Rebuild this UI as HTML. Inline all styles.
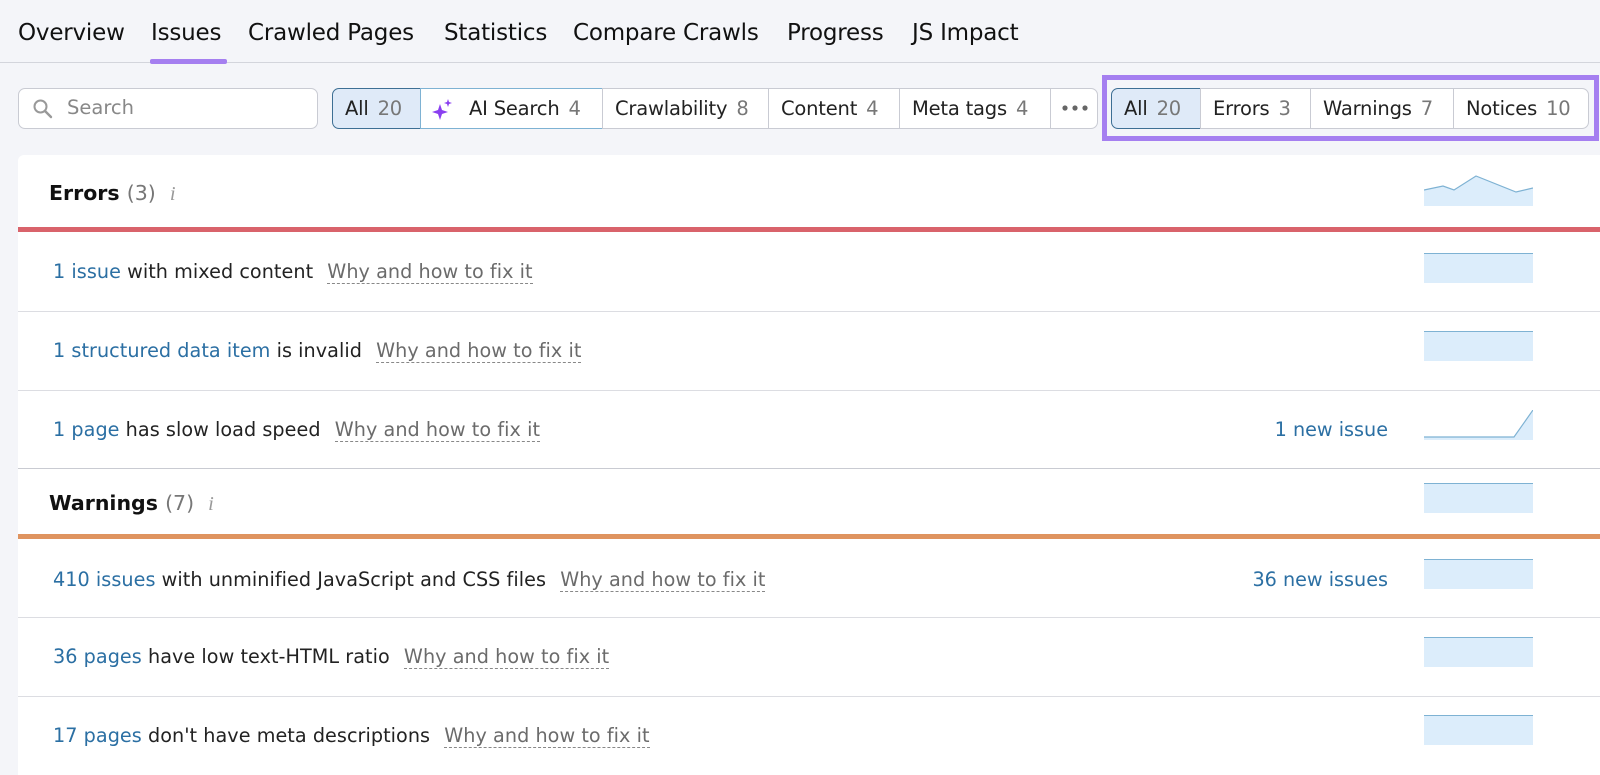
<!DOCTYPE html>
<html><head><meta charset="utf-8"><style>
*{margin:0;padding:0;box-sizing:border-box}
body{width:1600px;height:770px;background:#f4f5f9;font-family:"DejaVu Sans","Liberation Sans",sans-serif;color:#1a1a1a;position:relative;overflow:hidden}
.a{position:absolute;white-space:nowrap}
.nav{top:20px;font-size:23px;color:#111;letter-spacing:-0.2px}
.seg{position:absolute;top:88px;height:41px;border:1px solid #c9cbd3;background:#fff;font-size:19.5px;line-height:39px;padding-left:12px;color:#222;white-space:nowrap;letter-spacing:-0.2px}
.seg b{font-weight:normal;color:#777;margin-left:9px}
.sel{background:#dfeaf8;border-color:#3d6f94}
.card{position:absolute;left:18px;top:155px;width:1582px;height:620px;background:#fff;border-radius:6px 0 0 0}
.row{position:absolute;left:53px;font-size:19.2px;color:#222;white-space:nowrap;letter-spacing:0.05px}
.row a{color:#2b6fa3;text-decoration:none}
.row u{text-decoration:none;color:#6b6b6b;border-bottom:1px dashed #888;margin-left:8px}
.sep{position:absolute;left:18px;width:1582px;height:1px;background:#dcdde2}
.sp{position:absolute;left:1424px;width:109px;height:30px;background:#dcedfb;border-top:1px solid #7eb2d3}
.new{position:absolute;font-size:19.2px;color:#2b6fa3;right:212px;white-space:nowrap}
.h{position:absolute;left:49px;font-size:20.5px;font-weight:bold;color:#111;white-space:nowrap}
.h span{font-weight:normal;color:#777}
.h i{font-family:"Liberation Serif",serif;color:#999;font-weight:normal;margin-left:14px}
</style></head><body>
<div class="a nav" style="left:18px">Overview</div>
<div class="a nav" style="left:151px">Issues</div>
<div class="a nav" style="left:248px">Crawled Pages</div>
<div class="a nav" style="left:444px">Statistics</div>
<div class="a nav" style="left:573px">Compare Crawls</div>
<div class="a nav" style="left:787px">Progress</div>
<div class="a nav" style="left:912px">JS Impact</div>
<div class="a" style="left:0;top:62px;width:1600px;height:1px;background:#d3d5dc"></div>
<div class="a" style="left:150px;top:59px;width:77px;height:5px;background:#a57ff0;border-radius:2px"></div>

<div class="a" style="left:18px;top:88px;width:300px;height:41px;border:1px solid #c9cbd3;border-radius:7px;background:#fff"></div>
<svg class="a" style="left:32px;top:98px" width="22" height="22" viewBox="0 0 22 22"><circle cx="8.5" cy="8.5" r="6" fill="none" stroke="#999" stroke-width="2"/><path d="M13 13l6 6" stroke="#999" stroke-width="2.4" stroke-linecap="round"/></svg>
<div class="a" style="left:67px;top:96px;font-size:19.5px;color:#888">Search</div>

<div class="seg sel" style="left:332px;width:89px;border-radius:7px 0 0 7px">All<b>20</b></div>
<div class="seg" style="left:420px;width:183px;border-color:#7eb2d3;padding-left:48px">AI Search<b>4</b></div>
<svg class="a" style="left:432px;top:98px" width="22" height="22" viewBox="0 0 22 22"><path d="M8 6l2 6 6 2-6 2-2 6-2-6-6-2 6-2z" fill="#8a3ff0"/><path d="M16 1l1 3 3 1-3 1-1 3-1-3-3-1 3-1z" fill="#8a3ff0"/></svg>
<div class="seg" style="left:602px;width:167px">Crawlability<b>8</b></div>
<div class="seg" style="left:768px;width:132px">Content<b>4</b></div>
<div class="seg" style="left:899px;width:152px">Meta tags<b>4</b></div>
<div class="seg" style="left:1050px;width:48px;border-radius:0 7px 7px 0;padding:0"><svg style="position:absolute;left:11px;top:16px" width="26" height="6"><circle cx="3" cy="3" r="2.6" fill="#666"/><circle cx="13" cy="3" r="2.6" fill="#666"/><circle cx="23" cy="3" r="2.6" fill="#666"/></svg></div>

<div class="a" style="left:1102px;top:75px;width:497px;height:66px;border:5px solid #a57ff0"></div>
<div class="seg sel" style="left:1111px;width:90px;border-radius:7px 0 0 7px">All<b>20</b></div>
<div class="seg" style="left:1200px;width:111px">Errors<b>3</b></div>
<div class="seg" style="left:1310px;width:144px">Warnings<b>7</b></div>
<div class="seg" style="left:1453px;width:136px;border-radius:0 7px 7px 0">Notices<b>10</b></div>

<div class="card"></div>
<div class="h" style="top:181px">Errors <span>(3)</span><i>i</i></div>
<svg class="a" style="left:1424px;top:175px" width="109" height="32"><path d="M0 15L19 11 30 15 52 1 92 17 109 13V31H0Z" fill="#dcedfb"/><path d="M0 15L19 11 30 15 52 1 92 17 109 13" fill="none" stroke="#7eb2d3" stroke-width="1.2"/></svg>
<div class="a" style="left:18px;top:227px;width:1582px;height:5px;background:#d9636b"></div>

<div class="row" style="top:260px"><a>1 issue</a> with mixed content <u>Why and how to fix it</u></div>
<div class="sp" style="top:253px"></div>
<div class="sep" style="top:311px"></div>
<div class="row" style="top:339px"><a>1 structured data item</a> is invalid <u>Why and how to fix it</u></div>
<div class="sp" style="top:331px"></div>
<div class="sep" style="top:390px"></div>
<div class="row" style="top:418px"><a>1 page</a> has slow load speed <u>Why and how to fix it</u></div>
<div class="new" style="top:418px">1 new issue</div>
<svg class="a" style="left:1424px;top:410px" width="109" height="30"><path d="M0 27H90L109 0V30H0Z" fill="#dcedfb"/><path d="M0 27H90L109 0" fill="none" stroke="#7eb2d3" stroke-width="1.2"/></svg>
<div class="sep" style="top:468px;background:#c9cbd2"></div>

<div class="h" style="top:491px">Warnings <span>(7)</span><i>i</i></div>
<div class="sp" style="top:483px"></div>
<div class="a" style="left:18px;top:534px;width:1582px;height:5px;background:#df9460"></div>

<div class="row" style="top:568px"><a>410 issues</a> with unminified JavaScript and CSS files <u>Why and how to fix it</u></div>
<div class="new" style="top:568px">36 new issues</div>
<div class="sp" style="top:559px"></div>
<div class="sep" style="top:617px"></div>
<div class="row" style="top:645px"><a>36 pages</a> have low text-HTML ratio <u>Why and how to fix it</u></div>
<div class="sp" style="top:637px"></div>
<div class="sep" style="top:696px"></div>
<div class="row" style="top:724px"><a>17 pages</a> don't have meta descriptions <u>Why and how to fix it</u></div>
<div class="sp" style="top:715px"></div>
</body></html>
